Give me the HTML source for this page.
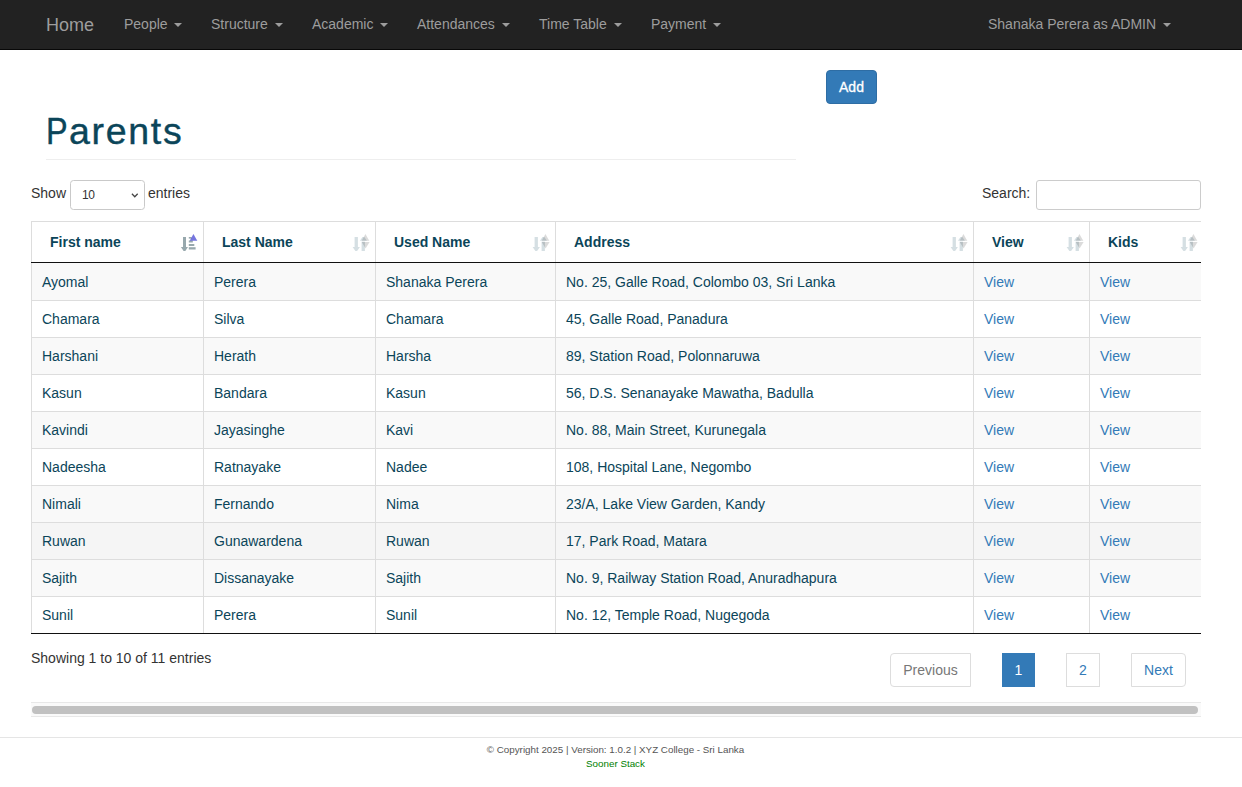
<!DOCTYPE html>
<html><head><meta charset="utf-8">
<style>
*{box-sizing:border-box;margin:0;padding:0}
html,body{width:1242px;height:787px;overflow:hidden;background:#fff}
body{font-family:"Liberation Sans",sans-serif;font-size:14px;line-height:20px;color:#333;position:relative}
.nav{position:absolute;left:0;top:0;width:1242px;height:50px;background:#222;border-bottom:1px solid #080808}
.nav span{position:absolute;top:14px;line-height:20px;color:#9d9d9d;white-space:nowrap}
.nav .brand{font-size:18px;left:46px;top:15px}
.caret{display:inline-block;width:0;height:0;margin-left:3px;vertical-align:middle;border-top:4px solid #9d9d9d;border-left:4px solid transparent;border-right:4px solid transparent;position:relative;top:0}
.btn-add{position:absolute;left:826px;top:70px;width:51px;height:34px;background:#337ab7;border:1px solid #2e6da4;border-radius:4px;color:#fff;text-align:center;line-height:32px;font-size:14px;-webkit-text-stroke:0.3px #fff}
h1{position:absolute;left:46px;top:109px;font-size:36px;line-height:44px;font-weight:normal;color:#0b4559;-webkit-text-stroke:0.4px #0b4559;white-space:nowrap}
h1 .P{display:inline-block;transform:scaleX(0.9);transform-origin:0 0;margin-right:-1px}
h1 .ar{font-size:37.5px;letter-spacing:1.7px}
.hr1{position:absolute;left:46px;top:159px;width:750px;height:1px;background:#eee}
.show{position:absolute;left:31px;top:183px}
.sel{position:absolute;left:70px;top:180px;width:75px;height:30px;border:1px solid #c9c9c9;border-radius:3.5px;font-size:12px;padding-left:11px;line-height:28px;color:#333;letter-spacing:-0.3px}
.sel svg{position:absolute;left:59px;top:11px;width:10px;height:8px}
.entries{position:absolute;left:148px;top:183px}
.searchl{position:absolute;left:982px;top:183px}
.search{position:absolute;left:1036px;top:180px;width:165px;height:30px;border:1px solid #ccc;border-radius:3px}
.tw{position:absolute;left:31px;top:221px;width:1170px;height:413px;overflow:hidden}
table{position:absolute;left:0;top:0;width:1172px;border-collapse:collapse;table-layout:fixed;color:#0b4559}
td,th{border:1px solid #ddd;padding:8px 10px;line-height:20px;text-align:left;white-space:nowrap}
th{padding:10px 18px;font-weight:bold;height:41px;border-bottom:1px solid #111}
tbody tr:nth-child(odd){background:#f9f9f9}
td{height:37px}
tbody tr:first-child td{height:38px;padding-top:9px}
tbody tr:last-child td{border-bottom:1px solid #111}
th{position:relative}
th svg{position:absolute;right:3px;top:8px;width:24px;height:24px}
a{color:#337ab7;text-decoration:none}
.info{position:absolute;left:31px;top:648px}
.pg{position:absolute;top:653px;height:34px;border:1px solid #ddd;border-radius:3px;color:#337ab7;text-align:center;line-height:31px;padding-top:1px}
.footer-hr{position:absolute;left:0;top:737px;width:1242px;height:1px;background:#e5e5e5}
.copy{position:absolute;left:0;width:1231px;top:743px;text-align:center;font-size:9.8px;line-height:14px;color:#555}
.sooner{position:absolute;left:0;width:1231px;top:757px;text-align:center;font-size:9.8px;line-height:14px;color:#008000}
.sb-track{position:absolute;left:31px;top:702px;width:1170px;height:15px;background:#fafafa;border-top:1px solid #e8e8e8;border-bottom:1px solid #e8e8e8}
.sb-thumb{position:absolute;left:32px;top:706px;width:1166px;height:8px;background:#c1c1c1;border-radius:4px}
</style></head><body>
<div class="nav">
<span class="brand">Home</span>
<span style="left:124px">People <b class="caret"></b></span>
<span style="left:211px">Structure <b class="caret"></b></span>
<span style="left:312px">Academic <b class="caret"></b></span>
<span style="left:417px">Attendances <b class="caret"></b></span>
<span style="left:539px">Time Table <b class="caret"></b></span>
<span style="left:651px">Payment <b class="caret"></b></span>
<span style="left:988px">Shanaka Perera as ADMIN <b class="caret"></b></span>
</div>
<div class="btn-add">Add</div>
<h1><span class="P">P</span><span class="ar">arents</span></h1>
<div class="hr1"></div>
<div class="show">Show</div>
<div class="sel">10<svg viewBox="0 0 10 8"><polyline points="1.9,1.8 4.8,4.8 7.7,1.8" fill="none" stroke="#444" stroke-width="1.25"/></svg></div>
<div class="entries">entries</div>
<div class="searchl">Search:</div>
<div class="search"></div>
<div class="tw"><table>
<colgroup><col style="width:172px"><col style="width:172px"><col style="width:180px"><col style="width:418px"><col style="width:116px"><col style="width:114px"></colgroup>
<thead><tr><th>First name<svg viewBox="0 0 24 24"><g fill="#97a8ad"><rect x="7" y="7" width="3" height="10.5"/><polygon points="4.9,17.1 12,17.1 9.3,21 7.6,21"/><rect x="12.8" y="7" width="2.8" height="1.6"/><rect x="12.8" y="10.5" width="4" height="2"/><rect x="12.8" y="14" width="5.5" height="2"/><rect x="12.8" y="17.2" width="6.8" height="2.3"/></g><polygon points="17.4,4 13.7,10.7 21.3,10.7" fill="rgba(60,60,210,0.7)"/></svg></th><th>Last Name<svg viewBox="0 0 24 24"><g fill="#d5dfe3"><rect x="6.6" y="7" width="3.3" height="10.5"/><polygon points="4.6,17.1 11.9,17.1 9.1,21 7.4,21"/><polygon points="14.5,7 16.3,7 18.9,10.7 11.9,10.7"/><rect x="13.6" y="11.6" width="3.3" height="9.4"/></g><g fill="rgba(0,0,0,0.14)"><polygon points="17.4,4 13.7,10.7 21.3,10.7"/><polygon points="13.7,11.9 21.6,11.9 17.6,18.6"/></g></svg></th><th>Used Name<svg viewBox="0 0 24 24"><g fill="#d5dfe3"><rect x="6.6" y="7" width="3.3" height="10.5"/><polygon points="4.6,17.1 11.9,17.1 9.1,21 7.4,21"/><polygon points="14.5,7 16.3,7 18.9,10.7 11.9,10.7"/><rect x="13.6" y="11.6" width="3.3" height="9.4"/></g><g fill="rgba(0,0,0,0.14)"><polygon points="17.4,4 13.7,10.7 21.3,10.7"/><polygon points="13.7,11.9 21.6,11.9 17.6,18.6"/></g></svg></th><th>Address<svg viewBox="0 0 24 24"><g fill="#d5dfe3"><rect x="6.6" y="7" width="3.3" height="10.5"/><polygon points="4.6,17.1 11.9,17.1 9.1,21 7.4,21"/><polygon points="14.5,7 16.3,7 18.9,10.7 11.9,10.7"/><rect x="13.6" y="11.6" width="3.3" height="9.4"/></g><g fill="rgba(0,0,0,0.14)"><polygon points="17.4,4 13.7,10.7 21.3,10.7"/><polygon points="13.7,11.9 21.6,11.9 17.6,18.6"/></g></svg></th><th>View<svg viewBox="0 0 24 24"><g fill="#d5dfe3"><rect x="6.6" y="7" width="3.3" height="10.5"/><polygon points="4.6,17.1 11.9,17.1 9.1,21 7.4,21"/><polygon points="14.5,7 16.3,7 18.9,10.7 11.9,10.7"/><rect x="13.6" y="11.6" width="3.3" height="9.4"/></g><g fill="rgba(0,0,0,0.14)"><polygon points="17.4,4 13.7,10.7 21.3,10.7"/><polygon points="13.7,11.9 21.6,11.9 17.6,18.6"/></g></svg></th><th>Kids<svg viewBox="0 0 24 24"><g fill="#d5dfe3"><rect x="6.6" y="7" width="3.3" height="10.5"/><polygon points="4.6,17.1 11.9,17.1 9.1,21 7.4,21"/><polygon points="14.5,7 16.3,7 18.9,10.7 11.9,10.7"/><rect x="13.6" y="11.6" width="3.3" height="9.4"/></g><g fill="rgba(0,0,0,0.14)"><polygon points="17.4,4 13.7,10.7 21.3,10.7"/><polygon points="13.7,11.9 21.6,11.9 17.6,18.6"/></g></svg></th></tr></thead>
<tbody>
<tr><td>Ayomal</td><td>Perera</td><td>Shanaka Perera</td><td>No. 25, Galle Road, Colombo 03, Sri Lanka</td><td><a>View</a></td><td><a>View</a></td></tr>
<tr><td>Chamara</td><td>Silva</td><td>Chamara</td><td>45, Galle Road, Panadura</td><td><a>View</a></td><td><a>View</a></td></tr>
<tr><td>Harshani</td><td>Herath</td><td>Harsha</td><td>89, Station Road, Polonnaruwa</td><td><a>View</a></td><td><a>View</a></td></tr>
<tr><td>Kasun</td><td>Bandara</td><td>Kasun</td><td>56, D.S. Senanayake Mawatha, Badulla</td><td><a>View</a></td><td><a>View</a></td></tr>
<tr><td>Kavindi</td><td>Jayasinghe</td><td>Kavi</td><td>No. 88, Main Street, Kurunegala</td><td><a>View</a></td><td><a>View</a></td></tr>
<tr><td>Nadeesha</td><td>Ratnayake</td><td>Nadee</td><td>108, Hospital Lane, Negombo</td><td><a>View</a></td><td><a>View</a></td></tr>
<tr><td>Nimali</td><td>Fernando</td><td>Nima</td><td>23/A, Lake View Garden, Kandy</td><td><a>View</a></td><td><a>View</a></td></tr>
<tr style="background:#f5f5f5"><td>Ruwan</td><td>Gunawardena</td><td>Ruwan</td><td>17, Park Road, Matara</td><td><a>View</a></td><td><a>View</a></td></tr>
<tr><td>Sajith</td><td>Dissanayake</td><td>Sajith</td><td>No. 9, Railway Station Road, Anuradhapura</td><td><a>View</a></td><td><a>View</a></td></tr>
<tr><td>Sunil</td><td>Perera</td><td>Sunil</td><td>No. 12, Temple Road, Nugegoda</td><td><a>View</a></td><td><a>View</a></td></tr>
</tbody></table></div>
<div class="info">Showing 1 to 10 of 11 entries</div>
<div class="pg" style="left:890px;width:81px;color:#777;border-radius:4px 0 0 4px">Previous</div>
<div class="pg" style="left:1002px;width:33px;height:34px;background:#337ab7;border-color:#337ab7;color:#fff;border-radius:0">1</div>
<div class="pg" style="left:1066px;width:34px;border-radius:0">2</div>
<div class="pg" style="left:1131px;width:55px;border-radius:0 4px 4px 0">Next</div>
<div class="sb-track"></div>
<div class="sb-thumb"></div>
<div class="footer-hr"></div>
<div class="copy">© Copyright 2025 | Version: 1.0.2 | XYZ College - Sri Lanka</div>
<div class="sooner">Sooner Stack</div>
</body></html>
